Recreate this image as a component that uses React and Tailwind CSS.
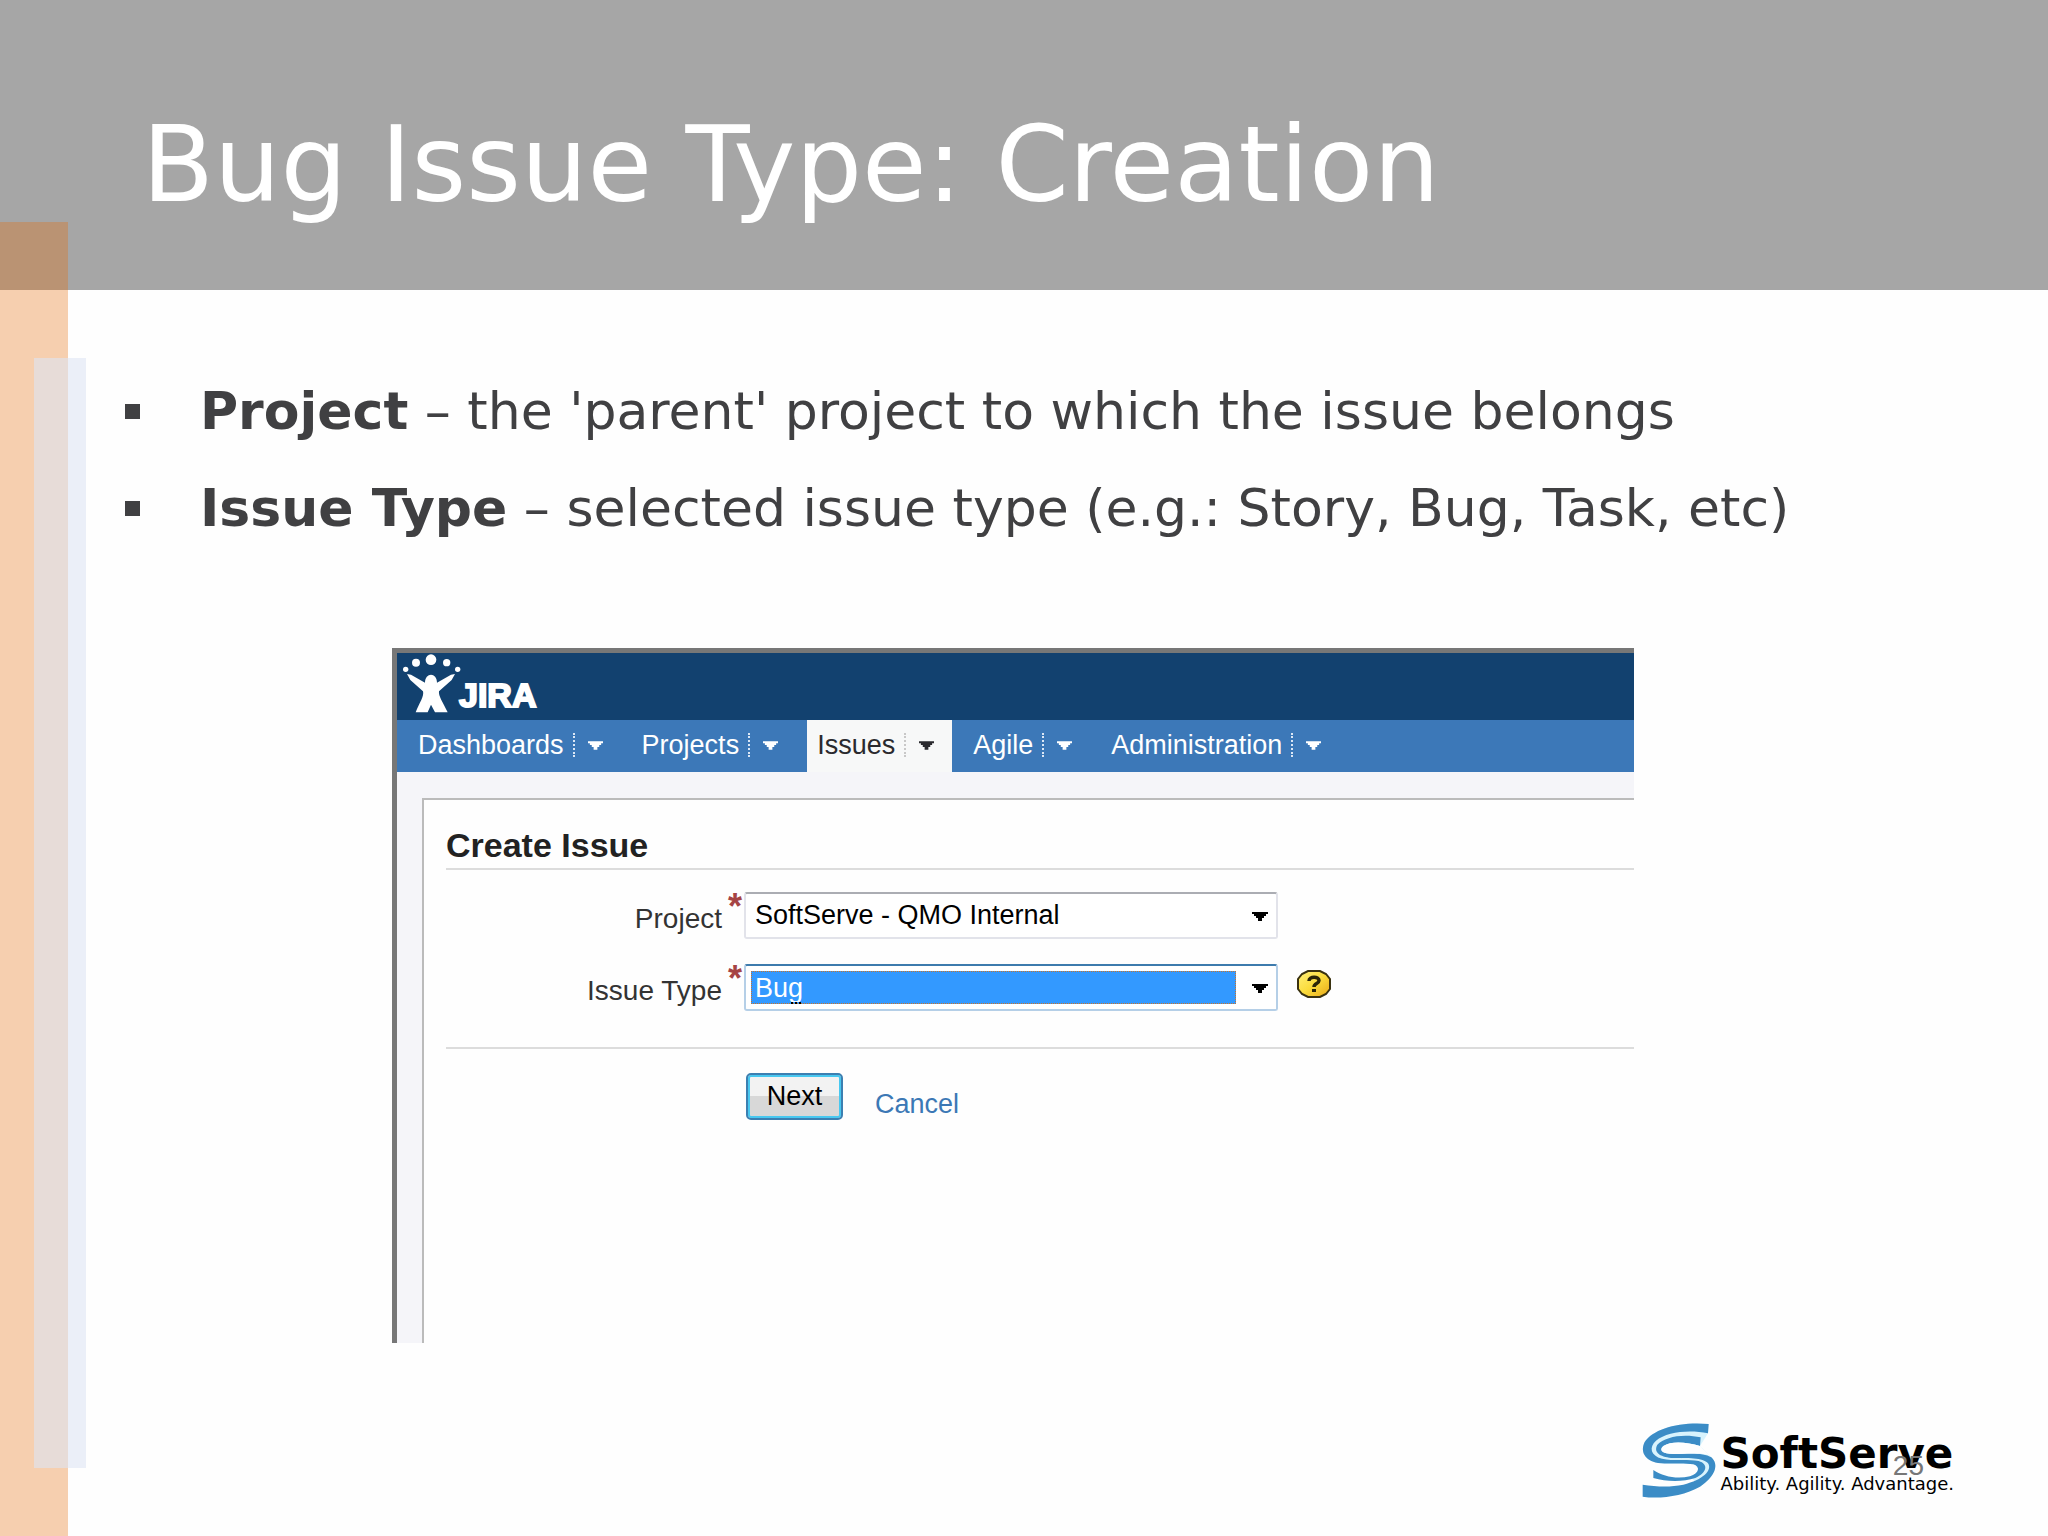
const TABS = [
  { name: "Dashboards" },
  { name: "Projects" },
  { name: "Issues", active: true },
  { name: "Agile" },
  { name: "Administration" },
];

function Arrow({ className }) {
  return (
    <svg viewBox="0 0 16 9" className={className} aria-hidden="true">
      <path d="M0 0H16V2H14V4H12V6H10V9H6V6H4V4H2V2H0Z" fill="currentColor" />
    </svg>
  );
}

function JiraLogo() {
  return (
    <div className="flex h-[67px] items-start pl-[6px] text-white">
      <svg viewBox="0 0 180 180" className="mt-[1px] h-[60px] w-[60px] shrink-0" fill="#fff" aria-hidden="true">
        <circle cx="8" cy="46" r="8" />
        <circle cx="39" cy="26" r="12" />
        <circle cx="84" cy="17" r="16" />
        <circle cx="131" cy="26" r="11" />
        <circle cx="164" cy="46" r="8" />
        <path d="M12 60L24 62L66 86C66 54 102 54 102 86L144 62L156 60L146 78L108 112C106 126 118 142 134 175H96L84 152L74 175H38C50 146 64 126 60 112L22 78Z" />
      </svg>
      <span className="-ml-[4px] pt-[20px] text-[34px] leading-[44px] font-bold [-webkit-text-stroke:2px_white]">
        JIRA
      </span>
    </div>
  );
}

function Tab({ name, active }) {
  return (
    <button
      type="button"
      className={
        active
          ? "flex h-[52px] items-center bg-[#f7f8f8] pr-[18px] pb-[2px] pl-[10px] text-[#2a2a2e]"
          : "flex h-[52px] items-center pr-[18px] pb-[2px] pl-[10px] text-white"
      }
    >
      <span>{name}</span>
      <span
        className={
          active
            ? "ml-[9px] h-[24px] border-l-2 border-dotted border-[#c8c8c8]"
            : "ml-[9px] h-[24px] border-l-2 border-dotted border-[#dbe7f5]"
        }
      />
      <Arrow className="ml-[13px] h-[9px] w-[15px]" />
    </button>
  );
}

function Label({ htmlFor, children }) {
  return (
    <label htmlFor={htmlFor} className="flex w-[298px] shrink-0 items-start justify-end text-[28px] text-[#333]">
      <span className="pt-[11px]">{children}</span>
      <span className="ml-[6px] w-[16px] text-[36px] leading-[30px] font-bold text-[#a54444]">*</span>
    </label>
  );
}

function HelpIcon() {
  return (
    <svg viewBox="0 0 34 28" className="h-[28px] w-[34px]" aria-hidden="true">
      <defs>
        <linearGradient id="help" x1="0" y1="0" x2="1" y2="1">
          <stop offset="0" stopColor="#fff07a" />
          <stop offset="0.5" stopColor="#fbdc3c" />
          <stop offset="1" stopColor="#e8a818" />
        </linearGradient>
      </defs>
      <path d="M11 1H23L29 4L33 9V19L29 24L23 27H11L5 24L1 19V9L5 4Z" fill="url(#help)" stroke="#3a3210" strokeWidth="2" />
      <path d="M12 11C12 6 22 6 22 10.500C22 14 17 13 17 17" fill="none" stroke="#2c2608" strokeWidth="3.500" />
      <path d="M15 19h4v3h-4z" fill="#2c2608" />
    </svg>
  );
}

function SoftServeLogo() {
  return (
    <div className="relative flex items-start">
      <svg viewBox="30 30 240 240" className="h-[80px] w-[80px] shrink-0" fill="#3b8cc6" aria-hidden="true">
        <path d="M236 42C150 34 70 56 44 96C30 124 44 152 84 159C120 163 160 158 190 163C212 170 208 190 180 199L210 230C256 200 268 164 244 142L210 108L234 70Z" fill="#d8f3fd" />
        <path d="M236 42C150 34 70 56 44 96C30 124 44 152 84 159C120 163 160 158 190 163C212 170 208 190 180 199C140 208 100 200 70 180V204C110 216 160 216 196 204C232 188 236 162 206 153C170 147 130 154 96 146C62 137 56 112 78 92C110 66 176 58 234 70Z" />
        <path d="M212 82C160 70 104 80 82 104C68 130 96 142 130 144C170 145 220 142 234 160C248 180 220 210 160 224C120 232 80 230 38 224V260C90 268 160 258 210 230C256 200 268 164 244 142C220 126 170 132 130 132C96 132 86 120 100 108C124 92 170 96 210 108Z" />
        <path d="M100 108C124 92 170 96 210 108L240 138C220 126 170 132 130 132C96 132 86 120 100 108Z" fill="#fefefe" />
      </svg>
      <div className="ml-[1px] pt-[12px] font-['DejaVu_Sans'] text-black">
        <div className="text-[42px] leading-[44px] font-bold">SoftServe</div>
        <div className="text-[18px] leading-[16px] text-black">Ability. Agility. Advantage.</div>
      </div>
      <span className="absolute right-[30px] bottom-[20px] text-[28px] leading-[28px] text-[#777]">25</span>
    </div>
  );
}

export default function App() {
  return (
    <div className="relative flex min-h-screen flex-col bg-[#fefefe] font-['Liberation_Sans',Arial,sans-serif]">
      <header className="flex h-[290px] items-center bg-[#a6a6a6] pt-[40px] pl-[142px]">
        <h1 className="font-['DejaVu_Sans',Verdana,sans-serif] text-[105px] leading-[120px] text-white">
          Bug Issue Type: Creation
        </h1>
      </header>
      <div className="absolute top-[222px] bottom-0 left-0 w-[68px] bg-[#e56600]/31" />
      <div className="absolute top-[358px] bottom-[68px] left-[34px] w-[52px] bg-[#dde4f4]/60" />

      <main className="flex flex-1 flex-col">
        <ul className="flex flex-col pt-[73px] pl-[125px] font-['DejaVu_Sans',Verdana,sans-serif] text-[52px] leading-[97px] text-[#404042]">
          <li className="flex items-center">
            <span className="mr-[60px] h-[15px] w-[15px] bg-[#404042]" />
            <span><b>Project</b> – the 'parent' project to which the issue belongs</span>
          </li>
          <li className="flex items-center">
            <span className="mr-[60px] h-[15px] w-[15px] bg-[#404042]" />
            <span><b>Issue Type</b> – selected issue type (e.g.: Story, Bug, Task, etc)</span>
          </li>
        </ul>

        <section className="mt-[91px] mr-[414px] ml-[392px] flex flex-1 flex-col border-t-[5px] border-l-[5px] border-[#777] bg-[#f5f5f9] text-[27px] leading-[32px]">
          <div className="bg-[#12416f]">
            <JiraLogo />
          </div>
          <nav className="flex gap-[11px] bg-[#3c78b8] pl-[11px]">
            {TABS.map((t) => (
              <Tab key={t.name} name={t.name} active={t.active} />
            ))}
          </nav>
          <form className="mt-[26px] ml-[25px] flex-1 border-t-2 border-l-2 border-[#bbb] bg-[#fefefe] pl-[22px]">
            <h2 className="border-b-2 border-[#dcdcdc] pt-[26px] pb-[4px] text-[34px] leading-[38px] font-bold text-[#222]">
              Create Issue
            </h2>
            <div className="mt-[22px] flex items-start">
              <Label htmlFor="project">Project</Label>
              <div className="relative flex h-[47px] w-[534px] rounded-[3px] border-2 border-[#e2e3ea] border-t-[#abadb3] bg-white">
                <select id="project" className="flex-1 appearance-none bg-transparent pb-[2px] pl-[9px] text-black outline-none">
                  <option>SoftServe - QMO Internal</option>
                </select>
                <Arrow className="pointer-events-none absolute top-[18px] right-[8px] h-[9px] w-[16px] text-black" />
              </div>
            </div>
            <div className="mt-[25px] flex items-start">
              <Label htmlFor="type">Issue Type</Label>
              <div className="relative flex h-[47px] w-[534px] rounded-[3px] border-2 border-[#b5cfe7] border-t-[#3d7bad] bg-white py-[5px] pr-[40px] pl-[5px]">
                <select id="type" className="flex-1 appearance-none border border-dotted border-[#c8742c] bg-[#3399ff] pb-[1px] pl-[3px] text-white outline-none">
                  <option>Bug</option>
                </select>
                <span className="absolute bottom-[5px] left-[45px] w-[10px] border-b-2 border-dotted border-black" />
                <Arrow className="pointer-events-none absolute top-[18px] right-[8px] h-[9px] w-[16px] text-black" />
              </div>
              <button type="button" aria-label="Help" className="mt-[6px] ml-[19px]">
                <HelpIcon />
              </button>
            </div>
            <div className="mt-[36px] flex items-start border-t-2 border-[#dcdcdc] pt-[24px] pl-[300px]">
              <button
                type="button"
                className="h-[47px] w-[97px] rounded-[5px] border-2 border-[#3c7fb1] bg-linear-to-b from-[#f2f2f2] from-50% to-[#d8d8d8] to-50% pb-[2px] text-black inset-ring-2 inset-ring-[#48c8f0]"
              >
                Next
              </button>
              <a href="#cancel" className="mt-[15px] ml-[32px] text-[#3c78b5]">
                Cancel
              </a>
            </div>
          </form>
        </section>
      </main>

      <footer className="flex justify-end pt-[77px] pr-[94px] pb-[36px]">
        <SoftServeLogo />
      </footer>
    </div>
  );
}
